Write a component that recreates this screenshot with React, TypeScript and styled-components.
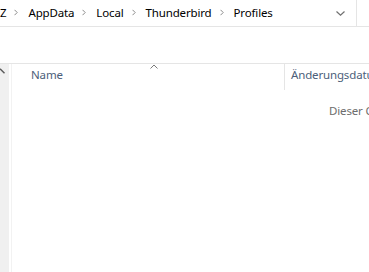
import styled, { createGlobalStyle } from 'styled-components';

const GlobalStyle = createGlobalStyle`
  html, body {
    margin: 0;
    padding: 0;
    background: #ffffff;
    overflow: hidden;
  }
  body {
    font-family: 'Noto Sans', 'Open Sans', sans-serif;
    font-size: 11.5px;
    letter-spacing: -0.15px;
  }
`;

const Window = styled.div`
  width: 369px;
  height: 272px;
  display: flex;
  flex-direction: column;
  overflow: hidden;
  background: #ffffff;
`;

const AddressRow = styled.div`
  display: flex;
  height: 26px;
  border-bottom: 1px solid #e5e5e5;
`;

const Crumbs = styled.div`
  flex: 1;
  display: flex;
  align-items: center;
  padding-bottom: 1px;
  white-space: nowrap;
  overflow: hidden;
  color: #000000;
`;

const Crumb = styled.span`
  line-height: 16px;
`;

const SepIcon = styled.svg`
  flex: none;
  margin: 0 10px 0 8px;
`;

const DropButton = styled.div`
  width: 31px;
  display: flex;
  align-items: center;
  justify-content: center;
`;

const RefreshSlot = styled.div`
  width: 12px;
  border-left: 1px solid #e5e5e5;
`;

const Main = styled.div`
  flex: 1;
  display: flex;
  margin-top: 36px;
  border-top: 1px solid #e5e5e5;
`;

const NavPane = styled.div`
  width: 9px;
  background: #f0f0f0;
  padding-top: 4px;
  box-sizing: border-box;
`;

const Splitter = styled.div`
  width: 1px;
  margin-left: 2px;
  background: #f2f2f2;
`;

const FileList = styled.div`
  flex: 1;
  padding-left: 11px;
  min-width: 0;
`;

const Header = styled.div`
  display: flex;
  height: 26px;
`;

const HeaderCell = styled.div<{ $width?: number; $divider?: boolean }>`
  position: relative;
  ${(p) => (p.$width ? `width: ${p.$width}px;` : 'flex: 1;')}
  box-sizing: border-box;
  display: flex;
  align-items: center;
  padding-left: ${(p) => (p.$divider ? 6 : 8)}px;
  padding-bottom: 5px;
  border-left: ${(p) => (p.$divider ? '1px solid #e5e5e5' : 'none')};
  color: #4c607a;
  white-space: nowrap;
  overflow: hidden;
`;

const SortCaret = styled.svg`
  position: absolute;
  top: 0;
  left: 50%;
  margin-left: -4px;
`;

const EmptyText = styled.div`
  margin-top: 13px;
  padding-left: 306px;
  line-height: 16px;
  color: #6d6d6d;
  white-space: nowrap;
`;

const Sep = () => (
  <SepIcon width='4' height='7' viewBox='0 0 4 7'>
    <polyline points='0.5,0.8 3.2,3.5 0.5,6.2' fill='none' stroke='#8c8c8c' strokeWidth='1' />
  </SepIcon>
);

export default function App() {
  const path = ['Z', 'AppData', 'Local', 'Thunderbird', 'Profiles'];

  return (
    <Window>
      <GlobalStyle />
      <AddressRow>
        <Crumbs>
          {path.map((part, idx) => (
            <>
              {idx > 0 && <Sep key={`s${idx}`} />}
              <Crumb key={part}>{part}</Crumb>
            </>
          ))}
        </Crumbs>
        <DropButton>
          <svg width='9' height='5' viewBox='0 0 9 5'>
            <polyline points='0.5,0.5 4.5,4.2 8.5,0.5' fill='none' stroke='#707070' strokeWidth='1.2' />
          </svg>
        </DropButton>
        <RefreshSlot />
      </AddressRow>
      <Main>
        <NavPane>
          <svg width='6' height='7' viewBox='0 0 6 7' style={{ display: 'block' }}>
            <polyline points='0,0.8 4.5,5.3' fill='none' stroke='#5a5a5a' strokeWidth='1.4' />
          </svg>
        </NavPane>
        <Splitter />
        <FileList>
          <Header>
            <HeaderCell $width={261}>
              Name
              <SortCaret width='8' height='5' viewBox='0 0 8 5'>
                <polyline points='0.5,4.5 4,1 7.5,4.5' fill='none' stroke='#7a7a7a' strokeWidth='1' />
              </SortCaret>
            </HeaderCell>
            <HeaderCell $divider>Änderungsdatum</HeaderCell>
          </Header>
          <EmptyText>Dieser Ordner ist leer.</EmptyText>
        </FileList>
      </Main>
    </Window>
  );
}
